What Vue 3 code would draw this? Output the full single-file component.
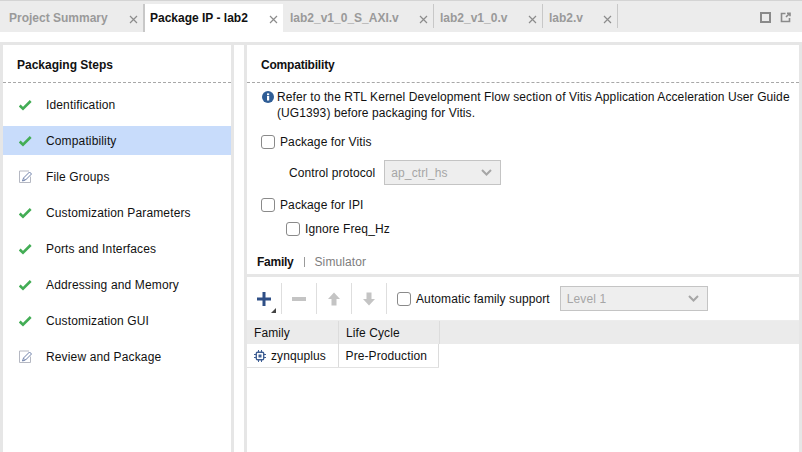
<template>
  <div class="page">
    <header class="tabbar">
      <div
        v-for="tab in tabs"
        :key="tab.name"
        class="tab"
        :class="{ active: tab.active }"
        :style="{ width: tab.width + 'px' }"
      >
        <span class="tab-name">{{ tab.name }}</span>
        <svg class="close" width="9" height="9" viewBox="0 0 9 9">
          <path d="M1 1l7 7M8 1l-7 7" />
        </svg>
      </div>
      <div class="tab-tools">
        <svg width="11" height="11" viewBox="0 0 11 11" class="tool">
          <rect x="1" y="1" width="9" height="9" />
        </svg>
        <svg width="11" height="11" viewBox="0 0 11 11" class="tool thin">
          <path class="popout" d="M5.500 1.500H1.500v8h8V6" />
          <path class="arrow" d="M6 5l3-3M7 1.200h3v3" />
        </svg>
      </div>
    </header>

    <main class="body">
      <aside class="steps">
        <h2 class="panel-title">Packaging Steps</h2>
        <ul class="step-list">
          <li v-for="step in steps" :key="step.name" class="step" :class="{ selected: step.selected }">
            <svg v-if="step.done" class="step-icon" width="14" height="12" viewBox="0 0 14 12">
              <path class="check" d="M.7 6.500L4 9.700 11.700 2" />
            </svg>
            <svg v-else class="step-icon" width="14" height="14" viewBox="0 0 14 14">
              <path class="sheet" d="M10 1H.5v11.500h11V6.500" />
              <path class="pencil" d="M3.500 11l1-3 6-6 2 2-6 6zM5 8.500L6.500 10" />
            </svg>
            <span>{{ step.name }}</span>
          </li>
        </ul>
      </aside>

      <section class="detail">
        <h2 class="panel-title detail-title">Compatibility</h2>
        <div class="form">
          <div class="note">
            <svg class="info" width="12" height="12" viewBox="0 0 12 12">
              <circle cx="6" cy="6" r="6" fill="#2f5d96" />
              <rect x="5" y="5" width="2.200" height="4.500" fill="#fff" />
              <rect x="5" y="2.400" width="2.200" height="1.800" fill="#fff" />
            </svg>
            <p>Refer to the RTL Kernel Development Flow section of Vitis Application Acceleration User Guide<br />(UG1393) before packaging for Vitis.</p>
          </div>

          <label class="check-row first"><i class="box"></i>Package for Vitis</label>
          <div class="protocol">
            <span>Control protocol</span>
            <div class="select small">
              <span>ap_ctrl_hs</span>
              <svg width="11" height="7" viewBox="0 0 11 7"><path d="M1 1l4.500 4.500L10 1" /></svg>
            </div>
          </div>
          <label class="check-row ipi"><i class="box"></i>Package for IPI</label>
          <label class="check-row nested"><i class="box"></i>Ignore Freq_Hz</label>
        </div>

        <nav class="subtabs">
          <b>Family</b>
          <i class="pipe"></i>
          <span>Simulator</span>
        </nav>

        <div class="toolbar">
          <button class="tool-btn">
            <svg width="16" height="16" viewBox="0 0 16 16"><path fill="#2f4f86" d="M6.500 1h3v5.500H15v3H9.500V15h-3V9.500H1v-3h5.500z" /></svg>
            <i class="corner"></i>
          </button>
          <button class="tool-btn">
            <svg width="16" height="16" viewBox="0 0 16 16"><rect x="1" y="6" width="14" height="4" fill="#c4c4c4" /></svg>
          </button>
          <button class="tool-btn">
            <svg width="16" height="16" viewBox="0 0 16 16"><path fill="#c4c4c4" d="M8 1.500l6 6.500h-3.500v6.500h-5V8H2z" /></svg>
          </button>
          <button class="tool-btn">
            <svg width="16" height="16" viewBox="0 0 16 16"><path fill="#c4c4c4" d="M8 14.500L2 8h3.500V1.500h5V8H14z" /></svg>
          </button>
          <label class="check-row auto"><i class="box"></i>Automatic family support</label>
          <div class="select level">
            <span>Level 1</span>
            <svg width="11" height="7" viewBox="0 0 11 7"><path d="M1 1l4.500 4.500L10 1" /></svg>
          </div>
        </div>

        <div class="table">
          <div class="thead">
            <div class="cell col-family">Family</div>
            <div class="cell col-life">Life Cycle</div>
          </div>
          <div class="trow">
            <div class="cell col-family">
              <svg width="12" height="12" viewBox="0 0 12 12" class="chip">
                <rect x="2.300" y="2.300" width="7.400" height="7.400" rx="1.200" />
                <rect class="core" x="4.500" y="4.500" width="3" height="3" />
                <path class="legs" d="M4.500 0v2M7.500 0v2M4.500 10v2M7.500 10v2M0 4.500h2M0 7.500h2M10 4.500h2M10 7.500h2" />
              </svg>
              zynquplus
            </div>
            <div class="cell col-life">Pre-Production</div>
          </div>
        </div>
      </section>
    </main>
  </div>
</template>

<script setup>
const tabs = [
  { name: 'Project Summary', width: 141 },
  { name: 'Package IP - lab2', width: 140, active: true },
  { name: 'lab2_v1_0_S_AXI.v', width: 150 },
  { name: 'lab2_v1_0.v', width: 109 },
  { name: 'lab2.v', width: 75 }
]

const steps = [
  { name: 'Identification', done: true },
  { name: 'Compatibility', done: true, selected: true },
  { name: 'File Groups', done: false },
  { name: 'Customization Parameters', done: true },
  { name: 'Ports and Interfaces', done: true },
  { name: 'Addressing and Memory', done: true },
  { name: 'Customization GUI', done: true },
  { name: 'Review and Package', done: false }
]
</script>

<style>
html,
body {
  margin: 0;
  overflow: hidden;
}
</style>

<style scoped>
.page {
  width: 802px;
  height: 452px;
  display: flex;
  flex-direction: column;
  overflow: hidden;
  background: #fff;
  color: #111;
  font: 12px/16px "Liberation Sans", Arial, sans-serif;
  letter-spacing: 0.1px;
}

.tabbar {
  height: 32px;
  flex: none;
  box-sizing: border-box;
  display: flex;
  padding: 3px 0 0 3px;
  background: #ececec;
  border-top: 1px solid #d4d4d4;
}

.tab {
  box-sizing: border-box;
  height: 24px;
  display: flex;
  align-items: flex-start;
  justify-content: space-between;
  padding: 6px 5px 0 6px;
  font-weight: bold;
  letter-spacing: 0;
  color: #9a9a9a;
  border-right: 1px solid #c8c8c8;
}

.tab.active {
  height: 28px;
  background: #fff;
  color: #111;
  border-right: none;
  border-left: 2px solid #c8c8c8;
  margin-left: -1px;
  padding-left: 5px;
  margin-right: 1px;
}

.close {
  margin-top: 5px;
  fill: none;
  stroke: #8c8c8c;
  stroke-width: 1.200;
}

.tab-tools {
  margin-left: auto;
  display: flex;
  gap: 9px;
  padding: 8px 11px 0 0;
}

.tool {
  fill: none;
  stroke: #8a8a8a;
  stroke-width: 2;
}

.tool.thin {
  stroke-width: 1.600;
}

.body {
  flex: 1;
  min-height: 0;
  display: flex;
  margin-top: 10px;
  border-top: 3px solid #e6e6e6;
}

.steps {
  box-sizing: border-box;
  width: 234px;
  flex: none;
  border-left: 3px solid #e6e6e6;
  border-right: 3px solid #e6e6e6;
}

.panel-title {
  box-sizing: border-box;
  height: 38px;
  margin: 0;
  padding: 12px 0 0 14px;
  font-size: 12px;
  line-height: 16px;
  font-weight: bold;
  letter-spacing: 0;
  border-bottom: 1px dashed #a8a8a8;
}

.step-list {
  list-style: none;
  margin: 0;
  padding: 7px 0 0;
  display: flex;
  flex-direction: column;
  gap: 7px;
  letter-spacing: 0.14px;
}

.step {
  height: 29px;
  display: flex;
  align-items: center;
  padding-left: 16px;
}

.step.selected {
  background: #c8dcfb;
}

.step-icon {
  width: 14px;
  margin-right: 13px;
  fill: none;
}

.check {
  fill: none;
  stroke: #43ad55;
  stroke-width: 2.600;
}

.sheet {
  fill: none;
  stroke: #b5b8c2;
}

.pencil {
  stroke: #6f81aa;
  fill: #fff;
}

.detail {
  flex: 1;
  min-width: 0;
  display: flex;
  flex-direction: column;
  margin-left: 10px;
  border-left: 3px solid #e6e6e6;
  border-right: 3px solid #e6e6e6;
}

.detail-title {
  flex: none;
  letter-spacing: -0.2px;
}

.form {
  flex: none;
  box-sizing: border-box;
  height: 164px;
  padding: 6px 0 0 14px;
}

.note {
  display: flex;
  gap: 3px;
  padding-left: 1px;
}

.info {
  flex: none;
  margin-top: 2px;
}

.note p {
  margin: 0;
  white-space: nowrap;
}

.check-row {
  display: flex;
  align-items: center;
  gap: 5px;
  height: 16px;
}

.box {
  box-sizing: border-box;
  width: 14px;
  height: 14px;
  flex: none;
  background: #fff;
  border: 1px solid #8a8a8a;
  border-radius: 3px;
}

.first {
  margin-top: 13px;
}

.protocol {
  display: flex;
  align-items: center;
  gap: 9px;
  margin-top: 10px;
  padding-left: 28px;
}

.select {
  box-sizing: border-box;
  display: flex;
  align-items: center;
  justify-content: space-between;
  height: 25px;
  padding: 0 8px 0 6px;
  background: #eee;
  border: 1px solid #c4c4c4;
  color: #a6a6a6;
}

.select svg {
  fill: none;
  stroke: #a6a6a6;
  stroke-width: 2;
}

.select.small {
  width: 117px;
}

.ipi {
  margin-top: 12px;
}

.nested {
  margin: 8px 0 0 25px;
}

.subtabs {
  flex: none;
  box-sizing: border-box;
  height: 30px;
  display: flex;
  align-items: center;
  padding: 2px 0 0 10px;
  color: #7d7d7d;
  border-bottom: 3px solid #e6e6e6;
}

.subtabs b {
  color: #111;
  letter-spacing: -0.25px;
}

.pipe {
  width: 1px;
  height: 10px;
  margin: 0 10px;
  background: #9a9a9a;
}

.toolbar {
  flex: none;
  box-sizing: border-box;
  height: 44px;
  display: flex;
  align-items: center;
  border-bottom: 1px solid #ededed;
}

.tool-btn {
  position: relative;
  box-sizing: border-box;
  width: 35px;
  height: 31px;
  padding: 0;
  display: flex;
  align-items: center;
  justify-content: center;
  background: none;
  border: none;
  border-right: 1px solid #dedede;
}

.corner {
  position: absolute;
  right: 5px;
  bottom: 1px;
  width: 0;
  height: 0;
  border-left: 5px solid transparent;
  border-bottom: 5px solid #444;
}

.auto {
  margin-left: 10px;
}

.select.level {
  width: 148px;
  margin-left: 10px;
}

.table {
  flex: 1;
}

.thead {
  display: flex;
  height: 23px;
  background: #ebebeb;
}

.trow {
  display: flex;
  width: 192px;
  height: 23px;
  border-bottom: 1px solid #e2e2e2;
}

.cell {
  box-sizing: border-box;
  display: flex;
  align-items: center;
  gap: 5px;
  padding-left: 7px;
  border-right: 1px solid #dcdcdc;
  white-space: nowrap;
}

.col-family {
  width: 92px;
}

.col-life {
  width: 101px;
}

.chip {
  flex: none;
  fill: none;
  stroke: #3f5f94;
  stroke-width: 1.400;
}

.chip .core {
  fill: #3f5f94;
  stroke: none;
}

.chip .legs {
  stroke-width: 1;
}
</style>
